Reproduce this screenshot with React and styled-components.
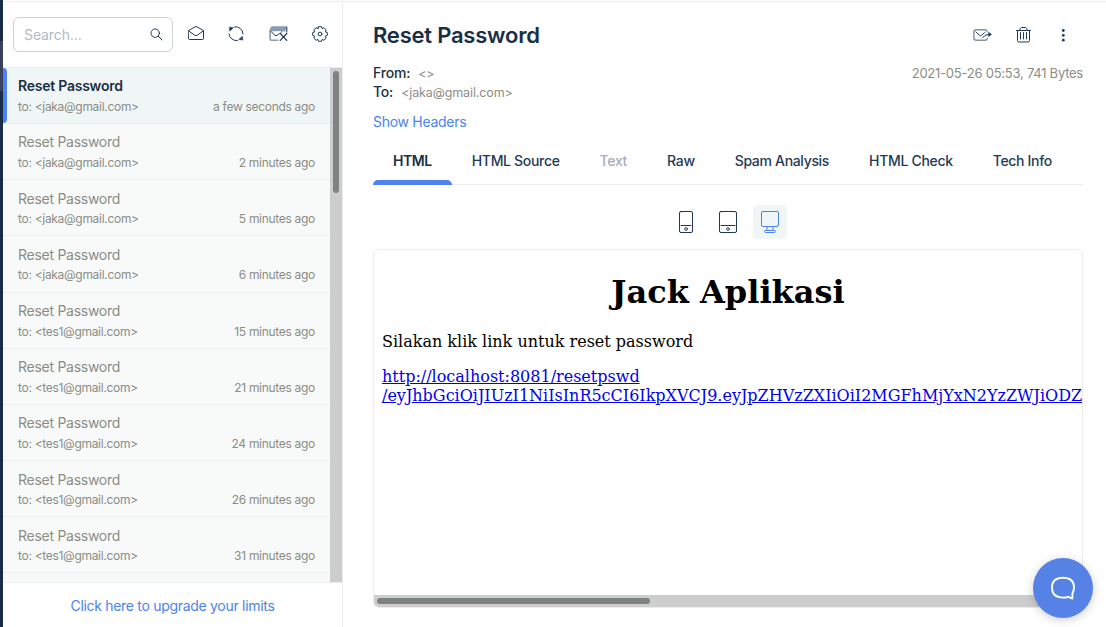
import React from "react";
import styled, { createGlobalStyle, css } from "styled-components";

const navy = "#1f3a55";
const ink = "#1a2f45";
const muted = "#8b8d85";
const blue = "#4c83ee";
const line = "#ebeced";

const GlobalStyle = createGlobalStyle`
  * { box-sizing: border-box; }
  body { margin: 0; background: #fff; font-family: Inter, sans-serif; overflow: hidden; }
`;

const Page = styled.div`
  display: flex;
  width: 1106px;
  height: 627px;
  overflow: hidden;
`;

const Rail = styled.div`
  flex: none;
  width: 3px;
  padding-top: 41px;
  background: #1a2c45;
`;

const RailActive = styled.div`
  height: 50px;
  background: #3b405c;
`;

const Workspace = styled.div`
  display: flex;
  flex: 1;
  min-width: 0;
  margin-top: 1px;
  border-top: 1px solid ${line};
`;

const Sidebar = styled.aside`
  display: flex;
  flex: none;
  flex-direction: column;
  width: 340px;
  border-right: 1px solid ${line};
`;

const Toolbar = styled.div`
  display: flex;
  flex: none;
  align-items: flex-start;
  height: 66px;
  padding: 15px 14px 0 10px;
  border-bottom: 1px solid ${line};
`;

const Search = styled.label`
  display: flex;
  align-items: center;
  width: 160px;
  height: 35px;
  padding: 0 9px 0 10px;
  border: 1px solid #cfd0d8;
  border-radius: 6px;
`;

const SearchInput = styled.input`
  flex: 1;
  min-width: 0;
  padding: 0;
  border: 0;
  outline: 0;
  background: none;
  color: ${ink};
  font: 400 14px/20px Inter, sans-serif;
  letter-spacing: -0.1px;
  &::placeholder { color: #b0bcc8; opacity: 1; }
`;

const Tools = styled.div`
  display: flex;
  flex: 1;
  justify-content: space-between;
  padding: 9px 0 0 15px;
`;

const Icon = styled.svg`
  display: block;
  flex: none;
  fill: none;
  stroke: ${(p) => p.$color || navy};
  stroke-width: 1;
  stroke-linecap: round;
  stroke-linejoin: round;
`;

const ListArea = styled.div`
  display: flex;
  flex: 1;
  min-height: 0;
`;

const Messages = styled.div`
  flex: 1;
  overflow: hidden;
  background: #f8faf9;
`;

const Message = styled.div`
  display: flex;
  flex-direction: column;
  height: 56.19px;
  padding: 8.42px 15px 0;
  border-bottom: 1px solid ${line};
  color: ${muted};
  &:first-child { margin-top: -0.22px; }
  ${(p) => p.$selected && css`
    position: relative;
    background: #f0f6f6;
    &::before {
      content: "";
      position: absolute;
      top: 0;
      bottom: 0;
      left: 0;
      width: 4px;
      border-radius: 0 4px 4px 0;
      background: ${blue};
    }
  `}
`;

const Subject = styled.div`
  font-size: 14px;
  line-height: 20px;
  font-weight: ${(p) => (p.$strong ? 600 : 400)};
  color: ${(p) => (p.$strong ? ink : "inherit")};
  letter-spacing: ${(p) => (p.$strong ? "-0.24px" : "-0.27px")};
`;

const Meta = styled.div`
  display: flex;
  justify-content: space-between;
  padding-top: 1.6px;
  font-size: 12px;
  line-height: 18px;
  letter-spacing: -0.3px;
`;

const VTrack = styled.div`
  flex: none;
  width: 12px;
  padding: 3px 3px 0;
  background: #cdcdcd;
`;

const VThumb = styled.div`
  height: 122px;
  border-radius: 3px;
  background: #7e8281;
`;

const Upgrade = styled.a`
  flex: none;
  height: 45px;
  padding-top: 13px;
  border-top: 1px solid ${line};
  color: ${blue};
  font-size: 14px;
  line-height: 20px;
  letter-spacing: -0.3px;
  text-align: center;
`;

const Detail = styled.main`
  display: flex;
  flex: 1;
  flex-direction: column;
  min-width: 0;
  padding: 18px 23px 19px 30px;
`;

const TitleRow = styled.header`
  display: flex;
  justify-content: space-between;
  height: 43px;
`;

const Title = styled.h1`
  margin: 0;
  color: ${ink};
  font-size: 22px;
  font-weight: 600;
  line-height: 30px;
  letter-spacing: -0.22px;
`;

const Actions = styled.div`
  display: flex;
  align-items: center;
  gap: 23.5px;
  height: 30px;
  padding: 0 12px 0 0;
`;

const AddressRow = styled.div`
  display: flex;
  align-items: baseline;
  height: 19px;
  color: ${muted};
  font-size: 13px;
  line-height: 19px;
`;

const Label = styled.span`
  margin-right: 8px;
  color: ${ink};
  font-size: 14px;
  font-weight: 500;
  letter-spacing: -0.2px;
`;

const Address = styled.span`
  font-size: 12.5px;
  letter-spacing: -0.12px;
`;

const Received = styled.span`
  margin-left: auto;
  letter-spacing: -0.24px;
`;

const HeadersLink = styled.a`
  height: 39px;
  padding-top: 12px;
  color: ${blue};
  font-size: 14px;
  line-height: 18px;
  letter-spacing: -0.29px;
`;

const Tabs = styled.nav`
  display: flex;
  height: 46px;
  margin-top: -1px;
  border-bottom: 1px solid ${line};
`;

const Tab = styled.div`
  display: flex;
  flex-direction: column;
  justify-content: space-between;
  height: 46px;
  padding: 13px 20px 0;
  color: ${(p) => (p.$disabled ? "#a5aebb" : navy)};
  font-size: 14px;
  font-weight: 500;
  line-height: 18px;
  letter-spacing: -0.32px;
  white-space: nowrap;
  ${(p) => p.$active && css`
    color: ${ink};
    font-weight: 600;
    letter-spacing: -0.45px;
    &::after {
      content: "";
      height: 5px;
      margin: 0 -20px;
      border-radius: 5px 5px 0 0;
      background: ${blue};
    }
  `}
`;

const Devices = styled.div`
  display: flex;
  justify-content: center;
  gap: 8px;
  padding: 20px 0 10px;
`;

const Device = styled.div`
  display: flex;
  align-items: center;
  justify-content: center;
  width: 34px;
  height: 34px;
  border-radius: 4px;
  background: ${(p) => (p.$active ? "#f0f6f6" : "transparent")};
`;

const Preview = styled.section`
  display: flex;
  flex: 1;
  flex-direction: column;
  min-height: 0;
  border: 1px solid ${line};
  border-radius: 6px;
  overflow: hidden;
`;

const Mail = styled.article`
  flex: 1;
  min-height: 0;
  padding: 8px 0 0 8px;
  overflow: hidden;
  color: #000;
  font: 16px/19px "DejaVu Serif", serif;
`;

const MailTitle = styled.h1`
  margin: 16px 8px 21px 0;
  font-size: 32px;
  line-height: 37px;
  text-align: center;
`;

const MailText = styled.p`
  margin: 0 0 16px;
  white-space: nowrap;
`;

const MailLink = styled.a`
  color: #0000ee;
  text-decoration: underline;
`;

const HTrack = styled.div`
  flex: none;
  height: 12px;
  padding: 3px;
  background: #cdcdcd;
`;

const HThumb = styled.div`
  width: 273px;
  height: 6px;
  border-radius: 3px;
  background: #7e8281;
`;

const Chat = styled.button`
  position: absolute;
  top: 558px;
  left: 1033px;
  display: flex;
  align-items: center;
  justify-content: center;
  width: 60px;
  height: 60px;
  padding: 0;
  border: 0;
  border-radius: 50%;
  background: #5682e5;
  box-shadow: 0 2px 10px rgba(0, 0, 0, 0.2);
`;

const messages = [
  ["jaka", "a few seconds ago"],
  ["jaka", "2 minutes ago"],
  ["jaka", "5 minutes ago"],
  ["jaka", "6 minutes ago"],
  ["tes1", "15 minutes ago"],
  ["tes1", "21 minutes ago"],
  ["tes1", "24 minutes ago"],
  ["tes1", "26 minutes ago"],
  ["tes1", "31 minutes ago"],
];

const tabs = ["HTML", "HTML Source", "Text", "Raw", "Spam Analysis", "HTML Check", "Tech Info"];

const SearchIcon = () => (
  <Icon width="13" height="13" viewBox="0 0 13 13">
    <circle cx="5.2" cy="5.2" r="4.2" />
    <path d="M8.3 8.3 12 12" />
  </Icon>
);

const OpenMailIcon = () => (
  <Icon width="16" height="16" viewBox="0 0 16 16">
    <path d="M.5 4.500 7 .9q1-.6 2 0l6.500 3.600V12.500q0 1-1 1H1.500q-1 0-1-1ZM.7 5 6.800 9.200q1.200.8 2.400 0L15.300 5" />
  </Icon>
);

const RefreshIcon = () => (
  <Icon width="16" height="16" viewBox="0 0 16 16">
    <path d="M6.500.9A7 7 0 0 1 15 7.800M9.500 14.500A7 7 0 0 1 1.100 8" />
    <path d="M1.600 1.200 5.400 1.800 2 5ZM14.600 14 10.800 13.500 14.200 10.500Z" fill={navy} strokeWidth=".6" />
  </Icon>
);

const ClearMailIcon = () => (
  <Icon width="19" height="16" viewBox="0 0 19 16">
    <path d="M2.800.8H18l-2.100 4.200H.9Z" fill="#8d9cae" stroke="#8d9cae" />
    <path d="M1.100 5V12.500q0 1.700 1.700 1.700H9" stroke="#8d9cae" strokeWidth="1.600" />
    <path d="M1.800 5.700 6 9.300q1.100.8 2.200 0L13 5.600V5Z" fill="#fff" stroke="none" />
    <path d="M2 5.500 6 9.300q1.100.8 2.200 0L10.500 7.500M12 6.300l.7-.5M17.800 1.500V6" />
    <path d="m11.300 7.500 6.500 6.800m0-6.800-6.500 6.800" strokeWidth="1.200" />
  </Icon>
);

const GearIcon = () => (
  <Icon width="16" height="16" viewBox="0 0 16 16">
    <path d="M6.500.7h3l.6 1.900 1.800-.9 2.300 2.200-1 1.900 2.100.7v3l-2.100.7 1 1.900-2.300 2.200-1.800-.9-.6 1.900h-3l-.6-1.900-1.800.9-2.300-2.200 1-1.900-2.100-.7v-3l2.100-.7-1-1.900 2.300-2.200 1.800.9Z" />
    <circle cx="8" cy="8" r="1.900" />
  </Icon>
);

const ForwardIcon = () => (
  <Icon width="19" height="13" viewBox="0 0 19 13">
    <path d="M14 2.600Q13.800.8 12 .8H3.500Q.9.800.9 3.300v5.500q0 2.500 2.600 2.500H12q1.800 0 2.200-1.800" stroke="#8394a7" strokeWidth="1.500" />
    <path d="m3 2.900 3.500 3.500q1 .8 2 0L11.500 3.700M9.500 8.800q2-3.400 6-3.400" />
    <path d="m15.700 3.300 2.800 2.100-2.800 2.100Z" fill={navy} strokeWidth=".5" />
  </Icon>
);

const TrashIcon = () => (
  <Icon width="16" height="16" viewBox="0 0 16 16">
    <path d="M.5 3.500h14M3.500 3.300 4.500 1.200Q4.800.5 5.500.5h4q.7 0 1 .7l1 2.100M1.500 3.500V13.500q0 1.500 1.500 1.500h9q1.500 0 1.500-1.500V3.500M4.500 5.500v6.500M7.500 5.500v6.500M10.500 5.500v6.500" />
  </Icon>
);

const MoreIcon = () => (
  <Icon width="16" height="16" viewBox="0 0 16 16">
    <g fill={navy} stroke="none">
      <circle cx="8.300" cy="3.500" r="1.400" />
      <circle cx="8.300" cy="8.300" r="1.400" />
      <circle cx="8.300" cy="13.200" r="1.400" />
    </g>
  </Icon>
);

const PhoneIcon = () => (
  <Icon width="14" height="22" viewBox="0 0 14 22">
    <rect x=".5" y=".5" width="13" height="21" rx="1.500" />
    <path d="M2 14.500h10" />
    <circle cx="7" cy="18" r="1.400" strokeWidth=".9" />
  </Icon>
);

const TabletIcon = () => (
  <Icon width="18" height="22" viewBox="0 0 18 22">
    <rect x=".5" y=".5" width="17" height="21" rx="1.500" />
    <path d="M2 14.500h14" />
    <circle cx="9" cy="18" r="1.400" strokeWidth=".9" />
  </Icon>
);

const DesktopIcon = () => (
  <Icon $color={blue} width="18" height="22" viewBox="0 0 18 22">
    <rect x=".5" y=".5" width="17" height="15" rx="1.500" />
    <path d="M6.500 15.500 5.500 19.500M11.500 15.500l1 4M4.700 19.500h8.600q1.200 0 1.200 1t-1.200 1H4.700q-1.200 0-1.200-1t1.200-1Z" />
  </Icon>
);

const ChatIcon = () => (
  <Icon $color="#fff" width="26" height="24" viewBox="0 0 26 24">
    <path
      d="M18.300 20.800Q16.400 21.600 13 21.600C5.500 21.600 2 18.300 2 11.500S5.500 1.700 13 1.700 24 5 24 11.500q0 3.500-1.600 6V22.600Z"
      strokeWidth="1.900"
    />
  </Icon>
);

export default function App() {
  return (
    <>
      <GlobalStyle />
      <Page>
        <Rail><RailActive /></Rail>
        <Workspace>
          <Sidebar>
            <Toolbar>
              <Search>
                <SearchInput placeholder="Search..." />
                <SearchIcon />
              </Search>
              <Tools>
                <OpenMailIcon />
                <RefreshIcon />
                <ClearMailIcon />
                <GearIcon />
              </Tools>
            </Toolbar>
            <ListArea>
              <Messages>
                {messages.map(([user, time], i) => (
                  <Message key={i} $selected={i === 0}>
                    <Subject $strong={i === 0}>Reset Password</Subject>
                    <Meta>
                      <span>to: &lt;{user}@gmail.com&gt;</span>
                      <span>{time}</span>
                    </Meta>
                  </Message>
                ))}
              </Messages>
              <VTrack><VThumb /></VTrack>
            </ListArea>
            <Upgrade>Click here to upgrade your limits</Upgrade>
          </Sidebar>
          <Detail>
            <TitleRow>
              <Title>Reset Password</Title>
              <Actions>
                <ForwardIcon />
                <TrashIcon />
                <MoreIcon />
              </Actions>
            </TitleRow>
            <AddressRow>
              <Label>From:</Label>
              <Address>&lt;&gt;</Address>
              <Received>2021-05-26 05:53, 741 Bytes</Received>
            </AddressRow>
            <AddressRow>
              <Label>To:</Label>
              <Address>&lt;jaka@gmail.com&gt;</Address>
            </AddressRow>
            <HeadersLink>Show Headers</HeadersLink>
            <Tabs>
              {tabs.map((name) => (
                <Tab key={name} $active={name === "HTML"} $disabled={name === "Text"}>{name}</Tab>
              ))}
            </Tabs>
            <Devices>
              <Device><PhoneIcon /></Device>
              <Device><TabletIcon /></Device>
              <Device $active><DesktopIcon /></Device>
            </Devices>
            <Preview>
              <Mail>
                <MailTitle>Jack Aplikasi</MailTitle>
                <MailText>Silakan klik link untuk reset password</MailText>
                <MailText>
                  <MailLink>
                    http://localhost:8081/resetpswd<br />
                    /eyJhbGciOiJIUzI1NiIsInR5cCI6IkpXVCJ9.eyJpZHVzZXIiOiI2MGFhMjYxN2YzZWJiODZ
                  </MailLink>
                </MailText>
              </Mail>
              <HTrack><HThumb /></HTrack>
            </Preview>
          </Detail>
        </Workspace>
        <Chat aria-label="Open chat"><ChatIcon /></Chat>
      </Page>
    </>
  );
}
